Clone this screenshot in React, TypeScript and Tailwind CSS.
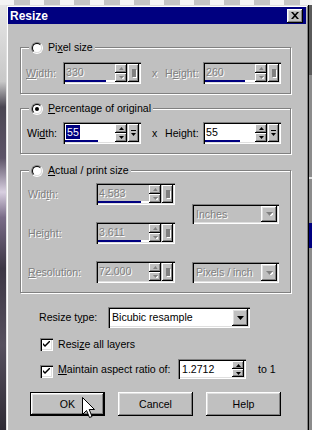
import type { ReactNode } from 'react'

const sunken =
  'shadow-[inset_1px_1px_0_#808080,inset_2px_2px_0_#000,inset_-1px_-1px_0_#fff,inset_-2px_-2px_0_#dfdfdf]'
const raised =
  'shadow-[inset_-1px_-1px_0_#000,inset_1px_1px_0_#fff,inset_-2px_-2px_0_#808080,inset_2px_2px_0_#dfdfdf]'
const small = 'shadow-[inset_-1px_-1px_0_#000,inset_1px_1px_0_#fff,inset_-2px_-2px_0_#808080]'
const dis = 'text-[#808080] [text-shadow:1px_1px_0_#fff]'

function Tri({ up, on }: { up?: boolean; on?: boolean }) {
  const c = on ? '#000' : '#808080'
  const d = up ? 'M0 3 L2.5 0 L5 3 Z' : 'M0 0 L5 0 L2.5 3 Z'
  return (
    <svg width="5" height="3" viewBox="0 0 5 3" className="block">
      {!on && <path d={d} fill="#fff" transform="translate(1 1)" />}
      <path d={d} fill={c} />
    </svg>
  )
}

function Spinner({ on }: { on?: boolean }) {
  return (
    <div className="flex w-[12px] flex-col">
      <div className={`flex flex-1 items-center justify-center bg-[#c0c0c0] ${small}`}>
        <Tri up on={on} />
      </div>
      <div className={`flex flex-1 items-center justify-center bg-[#c0c0c0] ${small}`}>
        <Tri on={on} />
      </div>
    </div>
  )
}

function SpinBox({
  value,
  bar,
  on,
  sel,
  className,
}: {
  value: string
  bar?: number
  on?: boolean
  sel?: boolean
  className: string
}) {
  return (
    <div className={`flex h-[22px] p-[2px] ${sunken} ${className}`}>
      <div className={`flex flex-1 flex-col ${on ? 'bg-white' : 'bg-[#c0c0c0]'}`}>
        <div className="flex flex-1 items-center pl-[1px]">
          <span className={sel ? 'bg-[#000080] px-px py-[2px] text-white' : on ? 'text-black' : dis}>
            {value}
          </span>
        </div>
        <div className={`flex h-[2px] ${bar !== undefined ? 'bg-white' : ''}`}>
          {bar !== undefined && <div className="h-full bg-[#000080]" style={{ width: `${bar}%` }} />}
        </div>
      </div>
      <Spinner on={on} />
      <div className={`ml-px flex w-[11px] items-center justify-center bg-[#c0c0c0] ${small}`}>
        {on ? (
          <svg width="5" height="7" viewBox="0 0 5 7" className="block">
            <rect x="0" y="0" width="5" height="1" fill="#000" />
            <path d="M0 3 L5 3 L2.5 6 Z" fill="#000" />
          </svg>
        ) : (
          <div className="h-[8px] w-[4px] bg-[#808080] shadow-[1px_1px_0_#fff]" />
        )}
      </div>
    </div>
  )
}

function Combo({ text, on, className }: { text: string; on?: boolean; className: string }) {
  return (
    <div className={`flex p-[2px] ${sunken} ${className}`}>
      <div className={`flex flex-1 items-center pl-[2px] ${on ? 'bg-white text-black' : dis}`}>{text}</div>
      <div className={`flex w-[16px] items-center justify-center bg-[#c0c0c0] ${raised}`}>
        <svg width="7" height="4" viewBox="0 0 7 4" className="block">
          {!on && <path d="M0 0 L7 0 L3.5 4 Z" fill="#fff" transform="translate(1 1)" />}
          <path d="M0 0 L7 0 L3.5 4 Z" fill={on ? '#000' : '#808080'} />
        </svg>
      </div>
    </div>
  )
}

function Radio({ checked }: { checked?: boolean }) {
  return (
    <div className="h-[12px] w-[12px] rounded-full border border-t-[#808080] border-r-white border-b-white border-l-[#808080]">
      <div className="flex h-full w-full items-center justify-center rounded-full border border-t-black border-r-[#dfdfdf] border-b-[#dfdfdf] border-l-black bg-white">
        {checked && <div className="h-[4px] w-[4px] rounded-full bg-black" />}
      </div>
    </div>
  )
}

function Check() {
  return (
    <div className={`flex h-[13px] w-[13px] shrink-0 items-center justify-center bg-white ${sunken}`}>
      <svg width="7" height="7" viewBox="0 0 7 7" className="block">
        <path d="M0 2 L0 4 L2 6 L7 1 L7 -1 L2 4 Z" fill="#000" />
      </svg>
    </div>
  )
}

function Group({
  legend,
  checked,
  className,
  children,
}: {
  legend: ReactNode
  checked?: boolean
  className: string
  children: ReactNode
}) {
  return (
    <div
      className={`relative ml-[12px] w-[271px] border border-[#808080] shadow-[1px_1px_0_#fff,inset_1px_1px_0_#fff] ${className}`}
    >
      <div className="absolute -top-[7px] left-[8px] flex h-[13px] items-center gap-[5px] bg-[#c0c0c0] px-[2px]">
        <Radio checked={checked} />
        <span>{legend}</span>
      </div>
      {children}
    </div>
  )
}

function Button({ children, def }: { children: ReactNode; def?: boolean }) {
  return (
    <div className={`h-[24px] w-[75px] ${def ? 'border border-black' : ''}`}>
      <div className={`flex h-full w-full items-center justify-center bg-[#c0c0c0] ${raised}`}>{children}</div>
    </div>
  )
}

export default function App() {
  return (
    <div className="relative flex h-[430px] w-[312px] flex-col overflow-hidden bg-[#8c8c8c] font-['Liberation_Sans',Arial,sans-serif] text-[10.6px] leading-none text-black">
      <div className="h-[5px] shrink-0 bg-[repeating-linear-gradient(90deg,#f4f4f4_0_14px,#c4c4c4_14px_30px)]" />
      <div className="flex flex-1">
        <div className="w-[6px] bg-[linear-gradient(180deg,#e6e6e6_0%,#c8c8c8_18%,#4a4652_24%,#5d5468_36%,#d8cfe0_44%,#7a6c88_50%,#3c3644_62%,#56505e_80%,#2e2a34_100%)]" />

        <div className="flex w-[303px] flex-col bg-[#c0c0c0] pt-[2px] pr-[3px] pl-[2px] shadow-[inset_-1px_0_0_#000,inset_1px_1px_0_#dfdfdf,inset_-2px_0_0_#808080,inset_2px_2px_0_#fff]">
          <div className="flex h-[17px] items-center justify-between bg-[#000080] pr-[3px] pl-[2px]">
            <span className="text-[12px] font-bold text-white">Resize</span>
            <div className={`flex h-[14px] w-[16px] items-center justify-center bg-[#c0c0c0] ${raised}`}>
              <svg width="8" height="7" viewBox="0 0 8 7" className="block">
                <path d="M0 0 L2 0 L4 2.3 L6 0 L8 0 L5 3.5 L8 7 L6 7 L4 4.7 L2 7 L0 7 L3 3.5 Z" fill="#000" />
              </svg>
            </div>
          </div>

          <Group
            className="mt-[23px] h-[47px]"
            legend={
              <>
                Pi<u>x</u>el size
              </>
            }
          >
            <div className="mt-[14px] flex h-[22px] items-center pl-[5px]">
              <span className={`w-[37px] ${dis}`}>
                <u>W</u>idth:
              </span>
              <SpinBox className="w-[78px]" value="330" bar={82} />
              <span className={`w-[24px] pl-[11px] ${dis}`}>x</span>
              <span className={`w-[38px] ${dis}`}>
                H<u>e</u>ight:
              </span>
              <SpinBox className="w-[78px]" value="260" bar={80} />
            </div>
          </Group>

          <Group
            checked
            className="mt-[14px] h-[46px]"
            legend={
              <>
                <u>P</u>ercentage of original
              </>
            }
          >
            <div className="mt-[13px] flex h-[22px] items-center pl-[6px]">
              <span className="w-[36px]">
                Wi<u>d</u>th:
              </span>
              <SpinBox className="w-[78px]" value="55" bar={66} on sel />
              <span className="w-[24px] pl-[11px]">x</span>
              <span className="w-[38px]">
                Hei<u>g</u>ht:
              </span>
              <SpinBox className="w-[78px]" value="55" bar={70} on />
            </div>
          </Group>

          <Group
            className="mt-[16px] h-[123px]"
            legend={
              <>
                <u>A</u>ctual / print size
              </>
            }
          >
            <div className="flex pt-[12px] pl-[7px]">
              <div className="flex flex-col gap-[17px]">
                <div className="flex items-center">
                  <span className={`w-[68px] ${dis}`}>
                    Wid<u>t</u>h:
                  </span>
                  <SpinBox className="w-[79px]" value="4.583" bar={85} />
                </div>
                <div className="flex items-center">
                  <span className={`w-[68px] ${dis}`}>
                    Hei<u>g</u>ht:
                  </span>
                  <SpinBox className="w-[79px]" value="3.611" bar={85} />
                </div>
                <div className="flex items-center">
                  <span className={`w-[68px] ${dis}`}>
                    <u>R</u>esolution:
                  </span>
                  <SpinBox className="w-[79px]" value="72.000" />
                </div>
              </div>
              <div className="ml-[17px] flex flex-col">
                <Combo className="mt-[21px] h-[20px] w-[87px]" text="Inches" />
                <Combo className="mt-[38px] h-[21px] w-[87px]" text="Pixels / inch" />
              </div>
            </div>
          </Group>

          <div className="mt-[14px] flex h-[21px] items-center pl-[31px]">
            <span className="w-[69px]">
              Resize t<u>y</u>pe:
            </span>
            <Combo on className="h-[21px] w-[142px]" text="Bicubic resample" />
          </div>

          <div className="mt-[10px] flex h-[13px] items-center gap-[5px] pl-[32px]">
            <Check />
            <span>
              Resi<u>z</u>e all layers
            </span>
          </div>

          <div className="mt-[8px] flex h-[20px] items-center pl-[32px]">
            <div className="mt-[4px]">
              <Check />
            </div>
            <span className="ml-[5px] w-[120px]">
              <u>M</u>aintain aspect ratio of:
            </span>
            <div className={`flex h-[20px] w-[68px] p-[2px] ${sunken}`}>
              <div className="flex flex-1 items-center bg-white pl-[2px]">1.2712</div>
              <Spinner on />
            </div>
            <span className="ml-[12px]">to 1</span>
          </div>

          <div className="mt-[13px] flex gap-[13px] pl-[22px]">
            <Button def>OK</Button>
            <Button>Cancel</Button>
            <Button>Help</Button>
          </div>
        </div>

        <div className="flex flex-1 flex-col">
          <div className="h-[70px] bg-[#5a5a5a]" />
          <div className="h-[102px] bg-[#8c8c8c]" />
          <div className="h-[2px] bg-[#e0e0e0]" />
          <div className="h-[44px] bg-[#8c8c8c]" />
          <div className="h-[25px] bg-[#000080]" />
          <div className="flex-1 bg-[#8c8c8c]" />
        </div>
      </div>

      <svg width="13" height="22" viewBox="0 0 13 22" className="absolute top-[397px] left-[82px]">
        <path
          d="M0.5 0.5 L0.5 17.5 L4.5 13.5 L7.5 20.5 L10 19.5 L7.2 12.5 L12.5 12.5 Z"
          fill="#fff"
          stroke="#000"
          strokeWidth="1"
        />
      </svg>
    </div>
  )
}
